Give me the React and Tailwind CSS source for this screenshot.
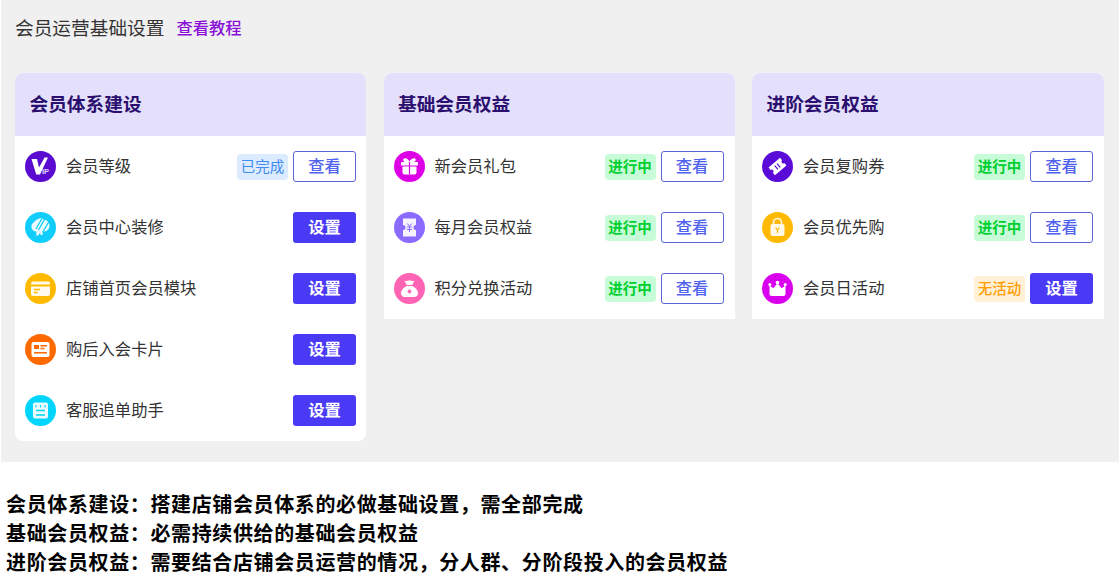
const Circle = ({ color, children }) => (
  <svg width="31" height="31" viewBox="0 0 31 31" className="shrink-0">
    <circle cx="15.5" cy="15.5" r="15.5" fill={color} />
    {children}
  </svg>
)

const icons = {
  vip: (
    <Circle color="#5a0bcf">
      <path d="M6.500 8h5.500l2 8.500L19.500 6.500H23L15 23.500h-3.800z" fill="#fff" />
      <text x="17" y="23" fontSize="7.500" fontWeight="700" fill="#e3d4ff" fontFamily="Liberation Sans, sans-serif">IP</text>
    </Circle>
  ),
  brush: (
    <Circle color="#10cdfb">
      <path d="M13 7c3-1.500 5 0 6.500 1 3 0 5 2.500 5 5.500 0 2.500-1 4-2.500 5-1.500 1-3 1-4 1l-.5 3.500h-2l-.3-2.500-2 3h-2l.2-4c-2.500 0-5-2-5-5 0-2 1-3.500 2.500-4 .5-1.500 2.500-2.500 4.100-3.500z" fill="#fff" opacity=".92" />
      <path d="M20.500 5.500 13.500 18M17 6.500 11 17M24 9.500 17.500 20.500" stroke="#10cdfb" strokeWidth="1.300" />
    </Circle>
  ),
  card: (
    <Circle color="#ffba00">
      <rect x="6" y="8.500" width="19" height="14.500" rx="2" fill="#fff" opacity=".92" />
      <rect x="6" y="11.500" width="19" height="2" fill="#ffba00" />
      <path d="M9 16.500h6M9 19.500h3.500" stroke="#ffba00" strokeWidth="1.300" />
    </Circle>
  ),
  idcard: (
    <Circle color="#ff6a00">
      <rect x="6.500" y="8" width="18" height="15" rx="2" fill="#fff" />
      <rect x="9" y="11" width="5" height="4" fill="#ff6a00" />
      <path d="M15.500 11.700h6.500M15.500 14.500h4M9 18.800h13" stroke="#ff6a00" strokeWidth="1.400" />
    </Circle>
  ),
  note: (
    <Circle color="#00d5fd">
      <rect x="8" y="7.500" width="15" height="16" rx="2" fill="#fff" opacity=".92" />
      <path d="M11 10v2.500M15.500 10v2.500M20 10v2.500" stroke="#00d5fd" strokeWidth="1.100" />
      <path d="M11 15.500h9M11 20h9" stroke="#00d5fd" strokeWidth="1.300" />
    </Circle>
  ),
  gift: (
    <Circle color="#dd00e6">
      <path d="M10 7.500c2-1 4.500 1 5.500 3 1-2 3.500-4 5.500-3 1.500 1 .5 3-1 3.500H11c-1.500-.5-2.500-2.500-1-3.500z" fill="#fff" />
      <rect x="7" y="11" width="17" height="3.500" rx=".8" fill="#fff" />
      <path d="M8.500 15.500h14v6a2 2 0 0 1-2 2h-10a2 2 0 0 1-2-2z" fill="#fff" />
      <path d="M15.500 11v12.500" stroke="#dd00e6" strokeWidth="1.200" />
    </Circle>
  ),
  coupon: (
    <Circle color="#8b6bff">
      <path d="M9 6.500h13V13a2.500 2.500 0 0 0 0 5v6.500H9V18a2.500 2.500 0 0 0 0-5z" fill="#fff" opacity=".92" />
      <path d="M13.300 11.500l2.200 2.700 2.200-2.700M12.800 15h5.400M12.800 17.500h5.400M15.500 14.500v5.500" stroke="#8b6bff" strokeWidth="1" fill="none" />
    </Circle>
  ),
  bag: (
    <Circle color="#ff63b4">
      <path d="M10.500 7.500c2 1 3 .5 5-.3 2 .8 3 1.300 5 .3l-2.200 4.500h-5.600z" fill="#fff" />
      <path d="M12.500 13h6c3 1.500 5.500 4.500 5.500 7 0 2.500-1.500 4-4 4h-9c-2.500 0-4-1.500-4-4 0-2.500 2.500-5.500 5.500-7z" fill="#fff" />
      <path d="M15.500 16l2.200 2.500-2.200 2.500-2.200-2.500z" fill="#ff63b4" />
    </Circle>
  ),
  ticket: (
    <Circle color="#5a0bd8">
      <g transform="rotate(-40 15.500 15.500)">
        <path d="M8 10.500h15v3.200a1.800 1.800 0 0 0 0 3.600v3.200H8v-3.200a1.800 1.800 0 0 0 0-3.600z" fill="#fff" />
        <path d="M14 13v5M17 13v5" stroke="#5a0bd8" strokeWidth="1.200" />
      </g>
    </Circle>
  ),
  lock: (
    <Circle color="#ffb900">
      <path d="M11.500 12V10.500a4 4 0 0 1 8 0V12" stroke="#fff" strokeOpacity=".85" strokeWidth="1.600" fill="none" />
      <rect x="8.500" y="12" width="14" height="12" rx="2" fill="#fff" opacity=".9" />
      <path d="M13.500 15.500l2 2.500 2-2.500M15.500 18v3" stroke="#ffb900" strokeWidth="1.200" fill="none" />
    </Circle>
  ),
  crown: (
    <Circle color="#d900ee">
      <path d="M7.500 12.500l4 2.800 3-4h2l3 4 4-2.800V21a2 2 0 0 1-2 2h-12a2 2 0 0 1-2-2z" fill="#fff" />
      <circle cx="7.800" cy="11.500" r="1.500" fill="#fff" />
      <circle cx="15.500" cy="9.500" r="1.800" fill="#fff" />
      <circle cx="23.200" cy="11.500" r="1.500" fill="#fff" />
    </Circle>
  ),
}

const columns = [
  {
    title: '会员体系建设',
    rounded: 'rounded-lg',
    rowPad: 'pr-[10px]',
    rows: [
      { icon: 'vip', label: '会员等级', status: 'done', action: '查看' },
      { icon: 'brush', label: '会员中心装修', action: '设置' },
      { icon: 'card', label: '店铺首页会员模块', action: '设置' },
      { icon: 'idcard', label: '购后入会卡片', action: '设置' },
      { icon: 'note', label: '客服追单助手', action: '设置' },
    ],
  },
  {
    title: '基础会员权益',
    rounded: 'rounded-t-lg',
    rowPad: 'pr-[11px]',
    rows: [
      { icon: 'gift', label: '新会员礼包', status: 'active', action: '查看' },
      { icon: 'coupon', label: '每月会员权益', status: 'active', action: '查看' },
      { icon: 'bag', label: '积分兑换活动', status: 'active', action: '查看' },
    ],
  },
  {
    title: '进阶会员权益',
    rounded: 'rounded-t-lg',
    rowPad: 'pr-[11px]',
    rows: [
      { icon: 'ticket', label: '会员复购券', status: 'active', action: '查看' },
      { icon: 'lock', label: '会员优先购', status: 'active', action: '查看' },
      { icon: 'crown', label: '会员日活动', status: 'none', action: '设置' },
    ],
  },
]

// full-width punctuation, written as escapes so it stays full-width
const notes = [
  '会员体系建设\uFF1A搭建店铺会员体系的必做基础设置\uFF0C需全部完成',
  '基础会员权益\uFF1A必需持续供给的基础会员权益',
  '进阶会员权益\uFF1A需要结合店铺会员运营的情况\uFF0C分人群\u3001分阶段投入的会员权益',
]

function Status({ type }) {
  if (type === 'done') {
    return <span className="w-[51px] h-[26px] pb-px flex items-center justify-center rounded bg-[#dcebff] text-[14.5px] text-[#3f8cf0]">已完成</span>
  }
  if (type === 'active') {
    return <span className="w-[51px] h-[26px] pb-px flex items-center justify-center rounded bg-[#c8fbd8] text-[14.5px] font-bold text-[#00d030]">进行中</span>
  }
  if (type === 'none') {
    return <span className="w-[51px] h-[26px] pb-px flex items-center justify-center rounded bg-[#fff0d6] text-[14.5px] font-medium text-[#ff9d00]">无活动</span>
  }
  return null
}

function Row({ row, pad }) {
  return (
    <div className={`h-[61px] flex items-center pl-[10px] ${pad}`}>
      {icons[row.icon]}
      <span className="ml-[10px] pb-[2px] text-[16.3px] text-[#333]">{row.label}</span>
      <div className="ml-auto flex items-center gap-[5px]">
        <Status type={row.status} />
        {row.action === '查看' ? (
          <button className="w-[63px] h-[31px] pb-[2px] rounded-[3px] border border-[#5a66d8] bg-white text-[16.3px] font-medium text-[#4f62ee]">查看</button>
        ) : (
          <button className="w-[63px] h-[31px] pb-[2px] rounded-[3px] bg-[#4a3af5] text-[16.3px] font-bold text-white">设置</button>
        )}
      </div>
    </div>
  )
}

export default function App() {
  return (
    <div className="h-[582px] bg-white overflow-hidden font-['Noto_Sans_CJK_SC','Noto_Sans',sans-serif]">
      <div className="h-[462px] ml-px bg-[#f0f0f0] pl-[14px] pr-[15px]">
        <div className="h-[73px] pb-[19px] flex items-center">
          <span className="text-[18.7px] text-[#333]">会员运营基础设置</span>
          <a className="ml-3 text-[16.3px] font-medium text-[#8a10d8]">查看教程</a>
        </div>
        <div className="grid grid-cols-[351px_351px_352px] gap-[17.5px] items-start">
          {columns.map((col) => (
            <div key={col.title} className={`bg-white overflow-hidden ${col.rounded}`}>
              <div className="h-[63px] pb-[2px] flex items-center pl-[14.5px] bg-[#e4dffa] text-[18.7px] font-bold text-[#2a0f6e]">
                {col.title}
              </div>
              {col.rows.map((row) => (
                <Row key={row.label} row={row} pad={col.rowPad} />
              ))}
            </div>
          ))}
        </div>
      </div>
      <div className="pt-[27px] pl-[6px] text-[20px] leading-[29px] tracking-[0.63px] font-bold text-black">
        {notes.map((line) => (
          <p key={line}>{line}</p>
        ))}
      </div>
    </div>
  )
}
